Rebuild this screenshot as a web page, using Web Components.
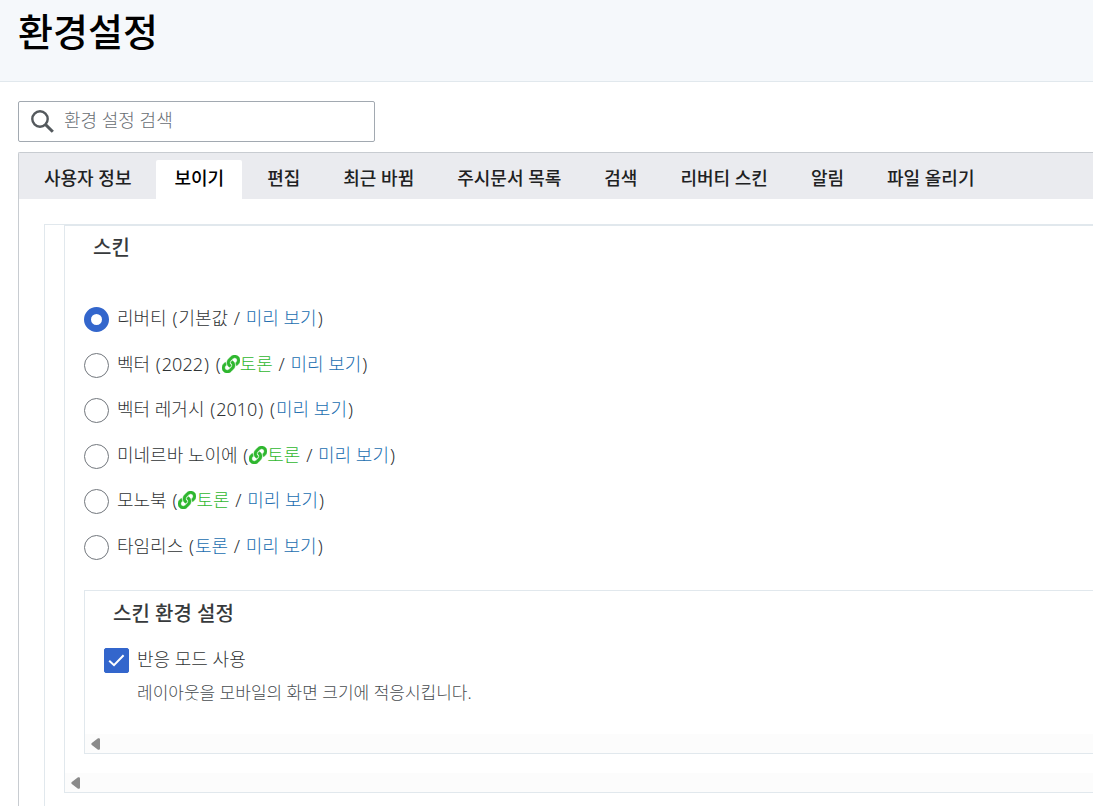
<!DOCTYPE html>
<html lang="ko">
<head>
<meta charset="utf-8">
<title>환경설정</title>
<style>
html, body { margin: 0; height: 100%; }
body {
  overflow: hidden;
  background: #fff;
  color: #303335;
  font-family: "Noto Sans", "Noto Sans CJK KR", sans-serif;
  font-size: 18px;
  font-weight: 300;
  line-height: 24px;
}
</style>
</head>
<body>
<prefs-page>
  <page-header slot="header">환경설정</page-header>
  <pref-search slot="search"></pref-search>
  <tab-bar slot="tabs" tabs="사용자 정보,보이기,편집,최근 바뀜,주시문서 목록,검색,리버티 스킨,알림,파일 올리기" active="1"></tab-bar>
  <pref-section>
    <pref-group legend="스킨">
      <skin-list>
        <skin-option name="리버티" note="기본값" checked></skin-option>
        <skin-option name="벡터 (2022)" talk="external"></skin-option>
        <skin-option name="벡터 레거시 (2010)"></skin-option>
        <skin-option name="미네르바 노이에" talk="external"></skin-option>
        <skin-option name="모노북" talk="external"></skin-option>
        <skin-option name="타임리스" talk="local"></skin-option>
      </skin-list>
      <pref-group legend="스킨 환경 설정" inner>
        <pref-check label="반응 모드 사용">레이아웃을 모바일의 화면 크기에 적응시킵니다.</pref-check>
      </pref-group>
    </pref-group>
  </pref-section>
</prefs-page>

<script>
class Base extends HTMLElement {
  render(html) {
    this.attachShadow({ mode: 'open' }).innerHTML =
      '<style>*{box-sizing:border-box}</style>' + html;
  }
}

customElements.define('prefs-page', class extends Base {
  connectedCallback() {
    this.render(`<style>
      :host { display: flex; flex-direction: column; height: 100%; }
      main { flex: 1; display: flex; flex-direction: column; padding: 19px 0 0 18px; gap: 10px; min-height: 0; }
      .panel { flex: 1; min-height: 0; border: 1px solid #c8ccd1; border-width: 1px 0 0 1px; border-radius: 2px 0 0 0; }
    </style>
    <slot name="header"></slot>
    <main><slot name="search"></slot>
      <div class="panel"><slot name="tabs"></slot><slot></slot></div>
    </main>`);
  }
});

customElements.define('page-header', class extends Base {
  connectedCallback() {
    this.render(`<style>
      :host { display: block; padding: 7px 18px 26px; background: #f5f8fb; border-bottom: 1px solid #e1e8ed; }
      h1 { margin: 0; color: #000; font-size: 38px; line-height: 48px; font-weight: 500; }
    </style><h1><slot></slot></h1>`);
  }
});

customElements.define('pref-search', class extends Base {
  connectedCallback() {
    this.render(`<style>
      :host { display: block; }
      label { display: flex; align-items: center; gap: 10px; width: 357px; max-width: 95%; height: 41px;
        padding: 0 12px; border: 1px solid #a2a9b1; border-radius: 2px; background: #fff; }
      svg { width: 23px; height: 23px; flex: none; }
      input { flex: 1; min-width: 0; border: 0; padding: 0 0 3px; outline: 0; background: none; font: inherit; color: inherit; }
      input::placeholder { color: #686d73; opacity: 1; }
    </style>
    <label>
      <svg viewBox="0 0 23 23" fill="none" stroke="#54595d" aria-hidden="true">
        <circle cx="9" cy="9" r="7.7" stroke-width="2.4"/><path d="M14.6 14.6 21.8 21.8" stroke-width="3"/>
      </svg>
      <input type="text" placeholder="환경 설정 검색" aria-label="환경 설정 검색">
    </label>`);
  }
});

customElements.define('tab-bar', class extends Base {
  connectedCallback() {
    const active = Number(this.getAttribute('active'));
    const tabs = this.getAttribute('tabs').split(',').map((t, i) =>
      `<button role="tab" aria-selected="${i === active}">${t}</button>`).join('');
    this.render(`<style>
      :host { display: block; overflow: hidden; background: #eaebef; }
      div { display: flex; gap: 7px; padding: 7px 7px 0; }
      button { flex: none; height: 39px; padding: 0 18px 3px; border: 0; border-radius: 2px 2px 0 0; background: none;
        font: inherit; font-weight: 500; color: #202122; white-space: nowrap; }
      [aria-selected=true] { background: #fff; color: #000; }
    </style><div role="tablist">${tabs}</div>`);
  }
});

customElements.define('pref-section', class extends Base {
  connectedCallback() {
    this.render(`<style>
      :host { display: block; margin: 25px 0 0 25px; padding: 0 0 26px 19px;
        border: 1px solid #e1e8ed; border-width: 1px 0 0 1px; }
    </style><slot></slot>`);
  }
});

customElements.define('pref-group', class extends Base {
  connectedCallback() {
    this.render(`<style>
      :host { display: block; }
      section { border: 1px solid #e1e8ed; border-right: 0; }
      h2 { margin: 0; padding: 9px 28px 0; font-size: 20px; line-height: 26px; font-weight: 500; color: #373a3c; }
      .body { padding: 46px 0 19px 19px; }
      :host([inner]) { margin-top: 30px; }
      :host([inner]) h2 { padding-top: 10px; }
      :host([inner]) .body { padding: 21px 0 28px 19px; }
      .scroll { height: 19px; display: flex; align-items: center; padding-left: 6px; background: #fcfcfc; }
      svg { width: 9px; height: 12px; }
    </style>
    <section aria-labelledby="h">
      <h2 id="h">${this.getAttribute('legend')}</h2>
      <div class="body"><slot></slot></div>
      <div class="scroll"><svg viewBox="0 0 9 12" aria-hidden="true"><path d="M7 .3.8 5q-1 1 0 2L7 11.700q2 .6 2-1.200V1.500q0-1.800-2-1.200z" fill="#8b8b8b"/></svg></div>
    </section>`);
  }
});

customElements.define('skin-list', class extends Base {
  connectedCallback() {
    this.render(`<style>
      :host { display: flex; flex-direction: column; justify-content: space-between; height: 253px; }
    </style><slot></slot>`);
    this.addEventListener('change', e => {
      for (const o of this.children) o.radio.checked = o === e.target;
    });
  }
});

const LINK_ICON = `<svg viewBox="0 0 512 512" aria-hidden="true"><path fill="currentColor" stroke="currentColor" stroke-width="14" d="M326.612 185.391c59.747 59.809 58.927 155.698.36 214.59-.11.12-.24.25-.36.37l-67.2 67.2c-59.27 59.27-155.699 59.262-214.96 0-59.27-59.26-59.27-155.7 0-214.96l37.106-37.106c9.84-9.84 26.786-3.3 27.294 10.606.648 17.722 3.826 35.527 9.69 52.721 1.986 5.822.567 12.262-3.783 16.612l-13.087 13.087c-28.026 28.026-28.905 73.66-1.155 101.96 28.024 28.579 74.086 28.749 102.325.51l67.2-67.19c28.191-28.191 28.073-73.757 0-101.83-3.701-3.694-7.429-6.564-10.341-8.569a16.037 16.037 0 0 1-6.947-12.606c-.396-10.567 3.348-21.456 11.698-29.806l21.054-21.055c5.521-5.521 14.182-6.199 20.584-1.731a152.482 152.482 0 0 1 20.522 17.197zM467.547 44.449c-59.261-59.262-155.69-59.27-214.96 0l-67.2 67.2c-.12.12-.25.25-.36.37-58.566 58.892-59.387 154.781.36 214.59a152.454 152.454 0 0 0 20.521 17.196c6.402 4.468 15.064 3.789 20.584-1.731l21.054-21.055c8.35-8.35 12.094-19.239 11.698-29.806a16.037 16.037 0 0 0-6.947-12.606c-2.912-2.005-6.64-4.875-10.341-8.569-28.073-28.073-28.191-73.639 0-101.83l67.2-67.19c28.239-28.239 74.3-28.069 102.325.51 27.75 28.3 26.872 73.934-1.155 101.96l-13.087 13.087c-4.35 4.35-5.769 10.79-3.783 16.612 5.864 17.194 9.042 34.999 9.69 52.721.509 13.906 17.454 20.446 27.294 10.606l37.106-37.106c59.271-59.259 59.271-155.699.001-214.959z"/></svg>`;

// Parentheses and slashes get a little air beside the Hangul.
const mark = text => text.replace(/[()/]/g, '<i>$&</i>');

customElements.define('skin-option', class extends Base {
  connectedCallback() {
    const talk = this.getAttribute('talk'), note = this.getAttribute('note');
    let extra = '';
    if (note) extra = note + mark(' / ');
    if (talk) extra = `<a href="#talk" class="${talk}">${talk === 'external' ? LINK_ICON : ''}토론</a>${mark(' / ')}`;
    this.render(`<style>
      :host { display: flex; gap: 8px; height: 25px; white-space: nowrap; }
      input { appearance: none; flex: none; margin: 0; width: 25px; height: 25px; border: 1px solid #72777d; border-radius: 50%; background: #fff; }
      input:checked { border: 7px solid #36c; }
      i { font-style: normal; padding: 0 1px; }
      a { color: #226eb0; text-decoration: none; }
      a.external { color: #2fb72f; }
      svg { width: 18px; height: 18px; vertical-align: -2px; }
      span { line-height: 23px; }
    </style>
    <input type="radio" id="r" name="skin"${this.hasAttribute('checked') ? ' checked' : ''}>
    <span><label for="r">${mark(this.getAttribute('name'))}</label> ${mark('(')}${extra}<a href="#preview">미리 보기</a>${mark(')')}</span>`);
    this.radio = this.shadowRoot.getElementById('r');
    this.radio.addEventListener('change', () => this.dispatchEvent(new Event('change', { bubbles: true })));
  }
});

customElements.define('pref-check', class extends Base {
  connectedCallback() {
    this.render(`<style>
      :host { display: grid; grid-template-columns: 25px auto; column-gap: 8px; row-gap: 7px; }
      input { appearance: none; margin: 0; width: 25px; height: 25px; border-radius: 2px; border: 1px solid #72777d; background: #fff; }
      input:checked { border-color: #36c; background: #36c; }
      .box { display: grid; }
      .box > * { grid-area: 1 / 1; }
      svg { width: 25px; height: 25px; pointer-events: none; }
      input:not(:checked) + svg { display: none; }
      label { line-height: 23px; }
      p { grid-column: 2; margin: 0; font-size: 17px; line-height: 26px; color: #484d51; }
    </style>
    <div class="box"><input type="checkbox" id="c" aria-describedby="d" checked>
    <svg viewBox="0 0 25 25" fill="none" stroke="#fff" stroke-width="2" aria-hidden="true"><path d="M5.200 12.800 10 17.200 19.600 7.200"/></svg></div>
    <label for="c">${this.getAttribute('label')}</label>
    <p id="d"><slot></slot></p>`);
  }
});
</script>
</body>
</html>
